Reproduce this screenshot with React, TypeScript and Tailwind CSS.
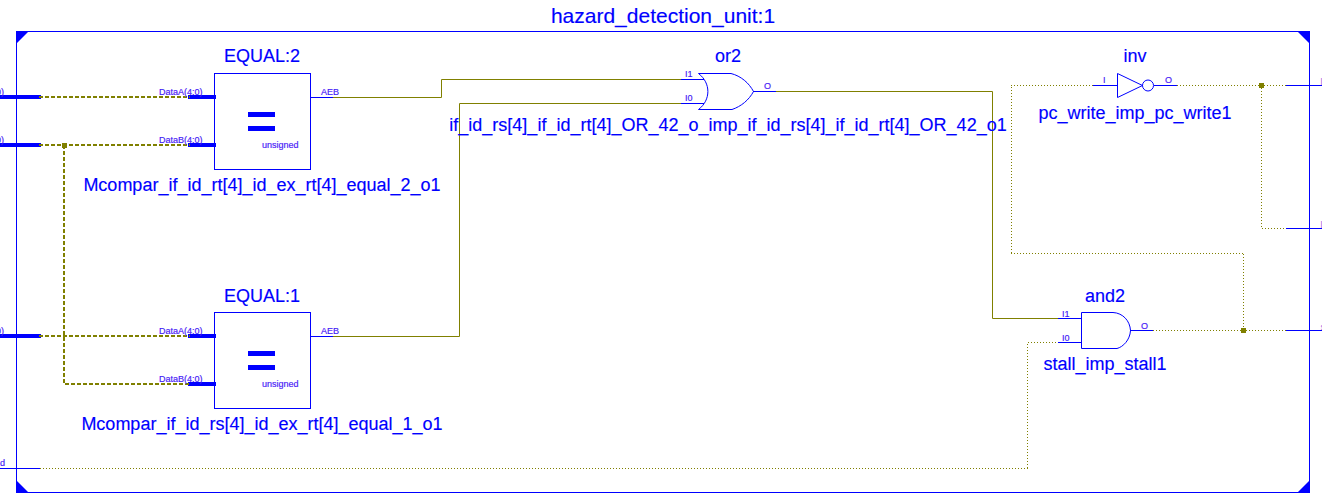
import React from 'react';

const BLUE = '#0000ff';
const OLIVE = '#808000';

// wires inside the sheet
const solidWires = [
  'M333 97.5H441.5V79.5H681',
  'M333 336.5H459.5V103.5H681',
  'M776 91.5H992.5V318.5H1058',
];
const busWires = [
  'M39 97H190',
  'M39 145H190',
  'M39 336H190',
  'M64 145V384H190',
];
// kept as single segments so the dots land on whole pixels
const dottedWires = [
  'M40 468.5H1028',
  'M1027.5 468V343',
  'M1028 342.5H1058',
  'M1153 330.5H1286',
  'M1243.5 330V253',
  'M1243 253.5H1011',
  'M1011.5 253V85',
  'M1011 85.5H1093',
  'M1177 85.5H1286',
  'M1261.5 85V228',
  'M1262 228.5H1286',
];
const blueStubs = [
  'M0 468.5H40',
  'M310 97.5H333',
  'M310 336.5H333',
  'M681 79.5H704',
  'M681 103.5H704',
  'M753 91.5H776',
  'M1093 85.5H1117',
  'M1154 85.5H1177',
  'M1058 318.5H1082',
  'M1058 342.5H1082',
  'M1130 330.5H1153',
  'M1286 85.5H1322',
  'M1286 228.5H1322',
  'M1286 330.5H1322',
];
const busStubs = [
  'M0 97H41',
  'M0 145H41',
  'M0 336H41',
  'M188 97H216',
  'M188 145H216',
  'M188 336H216',
  'M188 384H216',
];
const junctions = [
  [64, 145],
  [1243, 330],
  [1261, 85],
];

const bigLabels: [string, number, number][] = [
  ['EQUAL:2', 262, 62],
  ['EQUAL:1', 262, 302],
  ['or2', 728, 62],
  ['inv', 1135, 62],
  ['and2', 1105, 302],
  ['Mcompar_if_id_rt[4]_id_ex_rt[4]_equal_2_o1', 262, 191],
  ['Mcompar_if_id_rs[4]_id_ex_rt[4]_equal_1_o1', 262, 430],
  ['if_id_rs[4]_if_id_rt[4]_OR_42_o_imp_if_id_rs[4]_if_id_rt[4]_OR_42_o1', 728, 131],
  ['pc_write_imp_pc_write1', 1135, 119],
  ['stall_imp_stall1', 1105, 370],
];

const pinLabels: [string, number, number][] = [
  ['DataA(4:0)', 159, 95],
  ['DataB(4:0)', 159, 143],
  ['DataA(4:0)', 159, 334],
  ['DataB(4:0)', 159, 382],
  ['unsigned', 262, 148],
  ['unsigned', 262, 387],
  ['AEB', 321, 95],
  ['AEB', 321, 334],
  ['I1', 685, 77],
  ['I0', 685, 101],
  ['O', 764, 89],
  ['I', 1103, 83],
  ['O', 1165, 83],
  ['I1', 1062, 317],
  ['I0', 1062, 341],
  ['O', 1141, 329],
  ['0)', -4, 95],
  ['0)', -4, 143],
  ['0)', -4, 334],
  ['d', 0, 466],
];

// port names at the right edge, only their first pixel column is in view
const cutLabels: [string, number][] = [
  ['l', 85],
  ['l', 228],
  ['s', 330],
];

function EqualBox({ y }: { y: number }) {
  return (
    <g>
      <rect x={214.5} y={y + 0.5} width={96} height={96} fill="none" stroke={BLUE} />
      <rect x={248} y={y + 39} width={27} height={5} fill={BLUE} />
      <rect x={248} y={y + 53} width={27} height={5} fill={BLUE} />
    </g>
  );
}

export default function App() {
  return (
    <div className="w-[1322px] h-[497px] bg-white overflow-hidden">
      <svg
        width={1322}
        height={497}
        viewBox="0 0 1322 497"
        className="block font-['Liberation_Sans',sans-serif]"
      >
        {/* sheet frame + corner marks */}
        <rect x={16.5} y={31.5} width={1293} height={461} fill="none" stroke={BLUE} />
        <path d="M17 32H28L17 43Z" fill={BLUE} />
        <path d="M1309 32H1298L1309 43Z" fill={BLUE} />
        <path d="M17 492H28L17 481Z" fill={BLUE} />
        <path d="M1309 492H1298L1309 481Z" fill={BLUE} />

        {/* wires */}
        {solidWires.map((d) => (
          <path key={d} d={d} fill="none" stroke={OLIVE} />
        ))}
        {dottedWires.map((d) => (
          <path key={d} d={d} fill="none" stroke={OLIVE} strokeDasharray="1 2" />
        ))}
        {blueStubs.map((d) => (
          <path key={d} d={d} fill="none" stroke={BLUE} />
        ))}
        {busStubs.map((d) => (
          <path key={d} d={d} fill="none" stroke={BLUE} strokeWidth={4} />
        ))}
        {busWires.map((d) => (
          <path key={d} d={d} fill="none" stroke={OLIVE} strokeWidth={2} strokeDasharray="4 2" />
        ))}
        {junctions.map(([x, y]) => (
          <rect key={x} x={x - 2} y={y - 2} width={5} height={5} fill={OLIVE} />
        ))}

        <EqualBox y={73} />
        <EqualBox y={312} />

        {/* or2 */}
        <path
          d="M698.5 73.5H731C741 76 749 83 753.5 91.5C749 100 741 106.5 732 109.5H698.5C711 100 711 83 698.5 73.5Z"
          fill="none"
          stroke={BLUE}
        />
        {/* inv */}
        <path d="M1117.5 73.5V97.5L1142.5 85.5Z" fill="none" stroke={BLUE} />
        <circle cx={1148} cy={85.5} r={5.5} fill="none" stroke={BLUE} />
        {/* and2 */}
        <path
          d="M1081.5 312.5H1113C1123 313 1130 321 1130.5 330.5C1130 340 1123 347 1117 348.5H1081.5Z"
          fill="none"
          stroke={BLUE}
        />

        {/* text */}
        <text x={663} y={23} textAnchor="middle" fontSize={21} fill={BLUE} stroke={BLUE} strokeWidth={0.15}>
          hazard_detection_unit:1
        </text>
        {bigLabels.map(([t, x, y]) => (
          <text key={t} x={x} y={y} textAnchor="middle" fontSize={18} fill={BLUE} stroke={BLUE} strokeWidth={0.15}>
            {t}
          </text>
        ))}
        {pinLabels.map(([t, x, y]) => (
          <text
            key={`${t}-${x}-${y}`}
            x={x}
            y={y}
            fontSize={9}
            fill="#2a10f0"
            stroke="#8040ff"
            strokeWidth={0.2}
          >
            {t}
          </text>
        ))}
        {cutLabels.map(([t, y]) => (
          <text key={y} x={1320.4} y={y} fontSize={9} fill="#a868e0">
            {t}
          </text>
        ))}
      </svg>
    </div>
  );
}
